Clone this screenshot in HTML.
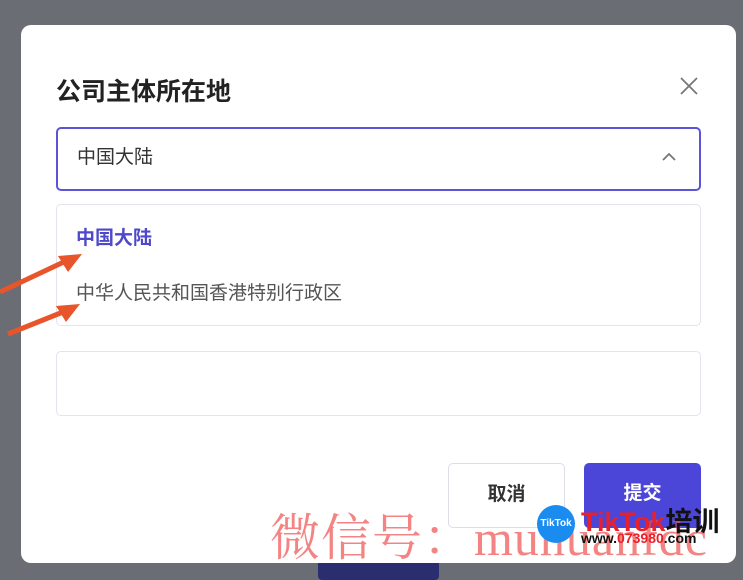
<!DOCTYPE html>
<html><head><meta charset="utf-8"><style>
*{box-sizing:border-box;margin:0;padding:0}
body{width:743px;height:575px;background:#6b6d75;position:relative;overflow:hidden;font-family:"Liberation Sans","Noto Sans CJK SC",sans-serif}
.modal{position:absolute;left:21px;top:25px;width:715px;height:538px;background:#fff;border-radius:10px}
.under{position:absolute;left:318px;top:560px;width:121px;height:20px;background:#2a2d6e;border-radius:4px}
.title{position:absolute;left:56px;top:72px;font-size:25px;font-weight:bold;color:#222}
.x{position:absolute;left:678px;top:75px}
.sel{position:absolute;left:56px;top:127px;width:645px;height:64px;border:2px solid #5b54d6;border-radius:5px;font-size:19px;color:#333;padding:13px 0 0 19px}
.chev{position:absolute;right:22px;top:23px}
.drop{position:absolute;left:56px;top:204px;width:645px;height:122px;border:1.5px solid #e3e4ec;border-radius:5px}
.o1{position:absolute;left:19px;top:18px;font-size:19px;font-weight:bold;color:#4f49c9}
.o2{position:absolute;left:19px;top:73px;font-size:19px;color:#555}
.inp{position:absolute;left:56px;top:351px;width:645px;height:65px;border:1.5px solid #e3e4ec;border-radius:5px}
.b1{position:absolute;left:448px;top:463px;width:117px;height:65px;border:1.5px solid #dcdde6;border-radius:5px;font-size:19px;font-weight:bold;color:#333;text-align:center;line-height:62px}
.b2{position:absolute;left:584px;top:463px;width:117px;height:65px;background:#4b45d8;border-radius:5px;font-size:19px;font-weight:bold;color:#fff;text-align:center;line-height:62px}
.wm{position:absolute;left:270px;top:498px;font-family:"Liberation Serif","Noto Serif CJK SC",serif;font-size:50px;color:rgba(240,80,80,.7);white-space:nowrap;letter-spacing:1px}
.logo{position:absolute;left:537px;top:505px;width:38px;height:38px;border-radius:50%;background:#1a8cf0;color:#fff;font-size:10px;font-weight:bold;text-align:center;line-height:38px}
.tt{position:absolute;left:581px;top:500px;font-size:27px;font-weight:bold;color:#e8202a;white-space:nowrap}
.tt span{color:#111}
.url{position:absolute;left:581px;top:530px;font-size:14px;font-weight:bold;color:#111}
.url span{color:#e8202a}
</style></head><body>
<div class="under"></div>
<div class="modal"></div>
<div class="title">公司主体所在地</div>
<svg class="x" width="22" height="22" viewBox="0 0 22 22"><path d="M3 3L19 19M19 3L3 19" stroke="#777" stroke-width="1.8" fill="none"/></svg>
<div class="sel">中国大陆<svg class="chev" width="16" height="10" viewBox="0 0 16 10"><path d="M2 8L8 2L14 8" stroke="#777" stroke-width="1.8" fill="none"/></svg></div>
<div class="drop"><div class="o1">中国大陆</div><div class="o2">中华人民共和国香港特别行政区</div></div>
<div class="inp"></div>
<div class="b1">取消</div>
<div class="b2">提交</div>
<svg style="position:absolute;left:0;top:250px" width="90" height="90" viewBox="0 0 90 90"><path d="M0 42L68 10" stroke="#e8552a" stroke-width="5"/><path d="M82 4L58 6L68 22Z" fill="#e8552a"/><path d="M8 84L68 60" stroke="#e8552a" stroke-width="5"/><path d="M80 54L56 56L66 72Z" fill="#e8552a"/></svg>
<div class="wm">微信号：muhuanfdc</div>
<div class="logo">TikTok</div>
<div class="tt">TikTok<span>培训</span></div>
<div class="url">www.<span>073980</span>.com</div>
</body></html>
